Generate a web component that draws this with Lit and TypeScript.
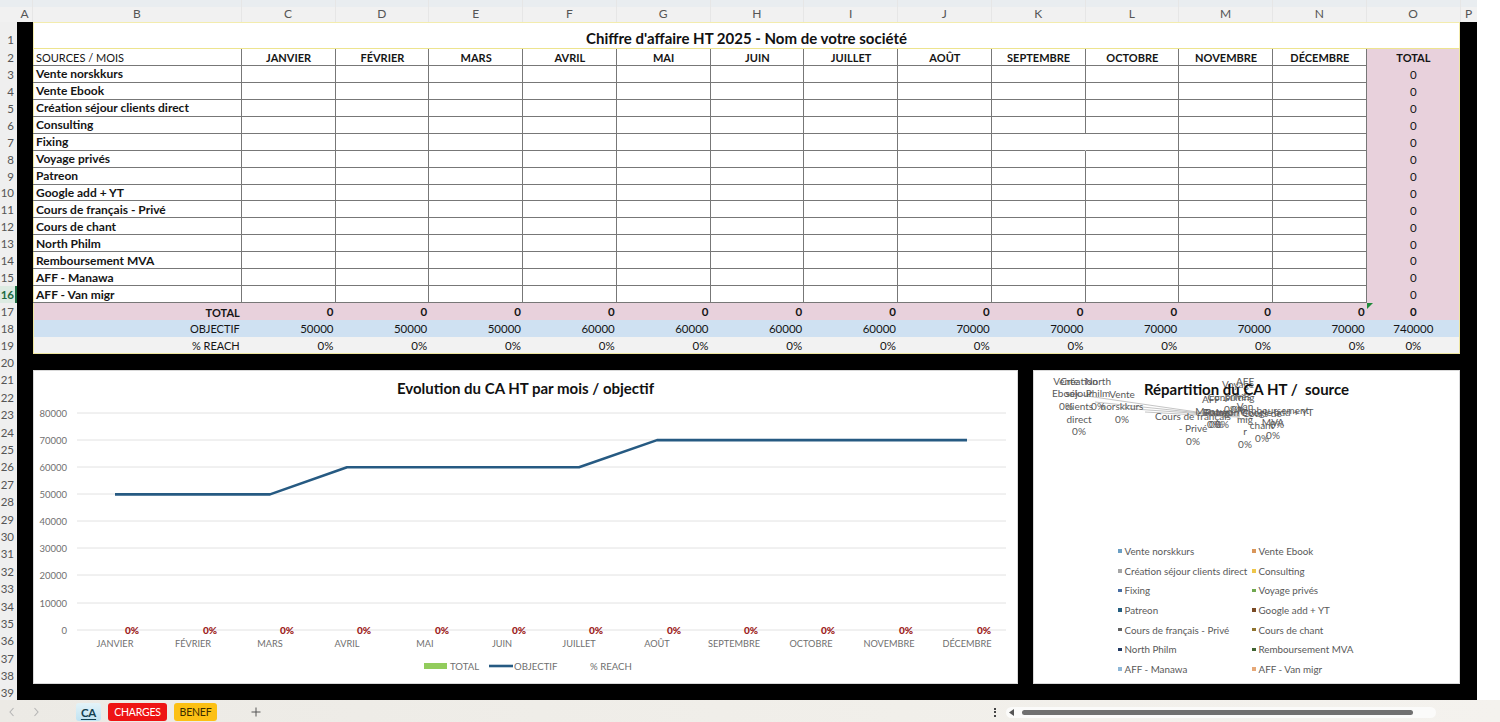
import { LitElement, html, css, svg } from "lit";
import { customElement } from "lit/decorators.js";

const COLS = ["A","B","C","D","E","F","G","H","I","J","K","L","M","N","O","P"];
const MONTHS = ["JANVIER","FÉVRIER","MARS","AVRIL","MAI","JUIN","JUILLET","AOÛT","SEPTEMBRE","OCTOBRE","NOVEMBRE","DÉCEMBRE"];
const SOURCES = ["Vente norskkurs","Vente Ebook","Création séjour clients direct","Consulting","Fixing","Voyage privés","Patreon","Google add + YT","Cours de français - Privé","Cours de chant","North Philm","Remboursement MVA","AFF - Manawa","AFF - Van migr"];
const OBJ = [50000,50000,50000,60000,60000,60000,60000,70000,70000,70000,70000,70000];
const LEGEND: [string,string][] = [
  ["Vente norskkurs","#6b9fc4"],["Vente Ebook","#d9965a"],
  ["Création séjour clients direct","#a5a5a5"],["Consulting","#eec64a"],
  ["Fixing","#4a6fa5"],["Voyage privés","#70a850"],
  ["Patreon","#255e80"],["Google add + YT","#7a4a25"],
  ["Cours de français - Privé","#636363"],["Cours de chant","#8f7430"],
  ["North Philm","#223a64"],["Remboursement MVA","#3f6432"],
  ["AFF - Manawa","#8fb8d8"],["AFF - Van migr","#e6a878"],
];
const X = [115,193,270,347,425,502,579,657,734,811,889,967];
const Y_LABELS: [string,number][] = [["80000",413],["70000",440],["60000",467],["50000",494],["40000",521],["30000",548],["20000",575],["10000",603],["0",630]];
const yFor = (v:number)=> 630 - v/80000*217;

const PIE_LABELS: [number,number,string[]][] = [
  [1066,381,["Vente","Ebook","0%"]],
  [1079,381,["Création","séjour","clients","direct","0%"]],
  [1098,381,["North","Philm","0%"]],
  [1122,394,["Vente","norskkurs","0%"]],
  [1193,416,["Cours de français","- Privé","0%"]],
  [1238,384,["Voyage","privés","0%"]],
  [1245,381,["AFF","-","Van","mig","r","0%"]],
  [1214,399,["AFF -","Manawa","0%"]],
  [1231,397,["Consulting","0%"]],
  [1222,412,["Patreon","0%"]],
  [1216,412,["Fixing","0%"]],
  [1273,410,["Remboursement","MVA","0%"]],
  [1277,412,["Google add + YT","0%"]],
  [1262,413,["Cours de","chant","0%"]],
];
const PIE_LINES = [
  "M1080 395 L1197 412 L1240 414","M1095 402 L1200 413 L1240 415","M1120 408 L1205 414 L1240 416","M1145 412 L1215 416 L1240 417","M1238 411 H1250 V419 H1238 Z",
];

@customElement("app-root")
export class AppRoot extends LitElement {
  static styles = css`
    :host { display:block; width:1500px; height:722px; overflow:hidden; background:#fff;
      font-family:"Lato","Liberation Sans",sans-serif; color:#111; }
    .head { display:flex; height:22px; background:linear-gradient(#e9edf0 0 7px,#f1f1f1 7px); color:#555; font-size:12px; }
    .corner { width:17px; flex:none; }
    .ch { display:flex; align-items:flex-end; justify-content:center; padding-bottom:1px; box-sizing:border-box; flex:none; border-right:1px solid #e6e6e6; }
    .ch.a { width:16px; } .ch.b { width:208.75px; } .ch.m { width:93.75px; } .ch.p { width:16.25px; border:0; }
    .head .rest { flex:1; background:#fff; }
    .mid { display:flex; height:678px; }
    .rows { width:17px; flex:none; background:#efefef; color:#555; font-size:11.5px; display:flex; flex-direction:column; }
    .rh { display:flex; align-items:center; justify-content:flex-end; padding-right:3px; height:16.94px; flex:none; box-sizing:border-box; }
    .rh.first { height:27px; padding-top:7px; }
    .rh.low { height:17.4px; }
    .rh.act { background:#dcebe2; color:#1e6b42; font-weight:700; border-right:2px solid #1e6b42; padding-right:1px; }
    .sheet { width:1460px; flex:none; background:#000; padding:0 17px 0 16px; box-sizing:border-box; display:flex; flex-direction:column; }
    .table { display:grid; grid-template-columns:208.75px repeat(12,93.75px) 93.25px; grid-template-rows:27px repeat(18,16.94px); background:#fff; font-size:12px; position:relative; }
    .title { grid-column:1 / -1; display:flex; align-items:center; justify-content:center; font-weight:700; font-size:15px; padding-top:4px; border:1px solid #f3ecae; border-bottom-color:#ede48f; box-sizing:border-box; }
    .c { display:flex; align-items:center; box-sizing:border-box; padding:1px 2px 0 3px; white-space:nowrap; overflow:hidden; color:#151515; line-height:1; }
    .caps { font-size:11px; }
    .num { font-size:11.5px; }
    .grid { border-right:1px solid #777; border-bottom:1px solid #777; }
    .gap { border-right-color:transparent; }
    .ctr { justify-content:center; }
    .r { justify-content:flex-end; }
    .bold { font-weight:700; }
    .pink { background:#e8d1dc; }
    .blue { background:#cfe1f2; }
    .grey { background:#f2f2f2; }
    .tri { position:absolute; left:1333.5px; top:280.5px; width:0; height:0; border-top:6px solid #1f8a3a; border-right:6px solid transparent; }
    .last { border-bottom:1px solid #eee6a0; }
    .edge { box-shadow:inset -1px 0 #eee6a0; padding-right:3px; }
    .edgel { box-shadow:inset 1px 0 #eee6a0; }
    .charts { display:flex; gap:15px; margin-top:16.5px; height:314px; }
    .chart { background:#fff; box-shadow:inset 0 0 0 1px #d9d9d9; flex:none; box-sizing:border-box; }
    .chart.line { width:985px; }
    .chart.pie { width:427px; display:flex; flex-direction:column; }
    svg { display:block; }
    .t { font-family:"Lato","Liberation Sans",sans-serif; }
    .legend { display:grid; grid-template-columns:134px 134px; grid-auto-rows:19.63px; padding-left:85px; font-size:9.8px; color:#595959; white-space:nowrap; }
    .li { display:flex; align-items:center; gap:3px; }
    .mk { width:3.5px; height:3.5px; flex:none; }
    .right { flex:1; background:#fff; }
    .tabs { height:22px; display:flex; align-items:center; padding-top:2px; box-sizing:border-box; background:linear-gradient(90deg,#eceae5,#f1efea 60%,#f4f2ee); font-size:10.5px; letter-spacing:-0.2px; }
    .nav { display:flex; gap:16px; margin-left:8px; width:68px; flex:none; }
    .tab { height:18px; display:flex; align-items:center; justify-content:center; border-radius:3px; box-sizing:border-box; flex:none; }
    .tab.ca { width:25px; background:linear-gradient(#e4f3f8,#bfe3f3); color:#12404f; font-weight:700; font-size:11.5px; text-decoration:underline; text-underline-offset:2px; margin-right:7px; }
    .tab.ch1 { width:59px; background:#ee1414; color:#fff; margin-right:7px; }
    .tab.be { width:43px; background:#fcc014; color:#3a2c00; }
    .plus { margin-left:34px; width:10px; flex:none; }
    .dots { margin-left:733px; width:3px; flex:none; display:flex; flex-direction:column; gap:1.5px; }
    .dots i { width:2px; height:2px; background:#444; display:block; }
    .track { margin-left:9px; width:430px; height:11px; background:#fbfbfa; border-radius:6px; display:flex; align-items:center; gap:4px; padding-left:3px; box-sizing:border-box; flex:none; }
    .thumb { width:391px; height:5px; border-radius:3px; background:#707070; margin-left:4px; }
  `;

  private cols(){ return COLS.map(c => html`<div class="ch ${c==="A"?"a":c==="B"?"b":c==="P"?"p":"m"}">${c}</div>`); }

  private rowHeads(){
    const out=[];
    for(let n=1;n<=39;n++){
      const k = n===1?"first":n>=20?"low":"";
      out.push(html`<div class="rh ${k} ${n===16?"act":""}">${n}</div>`);
    }
    return out;
  }

  private table(){
    return html`<div class="table">
      <div class="title">Chiffre d'affaire HT 2025 - Nom de votre société</div>
      <div class="c caps grid edgel">SOURCES / MOIS</div>
      ${MONTHS.map(m=>html`<div class="c caps grid ctr bold">${m}</div>`)}
      <div class="c caps ctr bold pink edge">TOTAL</div>
      ${SOURCES.map((s,row)=>html`
        <div class="c grid bold edgel">${s}</div>
        ${MONTHS.map((_,col)=>html`<div class="c grid ${row===4&&col===8?"gap":""}"></div>`)}
        <div class="c num ctr pink edge">0</div>`)}
      <div class="c caps r bold pink edgel">TOTAL</div>
      ${MONTHS.map(()=>html`<div class="c num r bold pink">0</div>`)}
      <div class="c num ctr bold pink edge">0</div>
      <div class="c caps r blue edgel">OBJECTIF</div>
      ${OBJ.map(v=>html`<div class="c num r blue">${v}</div>`)}
      <div class="c num ctr blue edge">740000</div>
      <div class="c caps r grey last edgel">% REACH</div>
      ${OBJ.map(()=>html`<div class="c num r grey last">0%</div>`)}
      <div class="c num ctr grey last edge">0%</div>
      <div class="tri"></div>
    </div>`;
  }

  private lineChart(){
    const pts = X.map((x,i)=>`${x},${yFor(OBJ[i])}`).join(" ");
    return html`<svg width="985" height="314" viewBox="33 370 985 314" class="t">
      <text x="525.5" y="394" text-anchor="middle" font-size="15" font-weight="700" fill="#111">Evolution du CA HT par mois / objectif</text>
      ${Y_LABELS.map(([l,y])=>svg`
        <line x1="77" x2="1006" y1=${y} y2=${y} stroke="#e2e2e2" stroke-width="1"/>
        <text x="67" y=${y+3.5} text-anchor="end" font-size="9.5" fill="#6f6f6f">${l}</text>`)}
      <polyline points=${pts} fill="none" stroke="#265a82" stroke-width="2.6" stroke-linejoin="round"/>
      ${X.map((x,i)=>svg`
        <text x=${x+17} y="634" text-anchor="middle" font-size="10" font-weight="900" fill="#9c2020">0%</text>
        <text x=${x} y="647" text-anchor="middle" font-size="9.2" fill="#6f6f6f">${MONTHS[i]}</text>`)}
      <rect x="424" y="663" width="23" height="6" fill="#92cc5c"/>
      <text x="450" y="670" font-size="9.6" fill="#6f6f6f">TOTAL</text>
      <line x1="489" x2="513" y1="666" y2="666" stroke="#265a82" stroke-width="2.6"/>
      <text x="514" y="670" font-size="9.6" fill="#6f6f6f">OBJECTIF</text>
      <text x="590" y="670" font-size="9.6" fill="#6f6f6f">% REACH</text>
    </svg>`;
  }

  private pieChart(){
    return html`<svg width="427" height="171" viewBox="1033 370 427 171" class="t">
      <g stroke="#b5b5b5" fill="none" stroke-width="0.8">${PIE_LINES.map(d=>svg`<path d=${d}/>`)}</g>
      ${PIE_LABELS.map(([x,y,ls])=>svg`<text text-anchor="middle" font-size="10" fill="#595959">${ls.map((l,i)=>svg`<tspan x=${x} y=${y+3.5+i*12.7}>${l}</tspan>`)}</text>`)}
      <text x="1246.5" y="394.5" text-anchor="middle" font-size="15" font-weight="700" fill="#111" xml:space="preserve">Répartition du CA HT /  source</text>
    </svg>
    <div class="legend">${LEGEND.map(([l,c])=>html`<div class="li"><span class="mk" style="background:${c}"></span>${l}</div>`)}</div>`;
  }

  render(){
    return html`
      <div class="head"><div class="corner"></div>${this.cols()}<div class="rest"></div></div>
      <div class="mid">
        <div class="rows">${this.rowHeads()}</div>
        <div class="sheet">
          ${this.table()}
          <div class="charts">
            <div class="chart line">${this.lineChart()}</div>
            <div class="chart pie">${this.pieChart()}</div>
          </div>
        </div>
        <div class="right"></div>
      </div>
      <div class="tabs">
        <div class="nav">
          <svg width="8" height="10" viewBox="0 0 8 10"><path d="M5.5 1 2 5l3.5 4" fill="none" stroke="#b5b5b5" stroke-width="1.1"/></svg>
          <svg width="8" height="10" viewBox="0 0 8 10"><path d="M2.5 1 6 5 2.5 9" fill="none" stroke="#b5b5b5" stroke-width="1.1"/></svg>
        </div>
        <div class="tab ca">CA</div>
        <div class="tab ch1">CHARGES</div>
        <div class="tab be">BENEF</div>
        <svg class="plus" width="10" height="10" viewBox="0 0 10 10"><path d="M5 0.5v9M0.5 5h9" stroke="#555" stroke-width="1"/></svg>
        <div class="dots"><i></i><i></i><i></i></div>
        <div class="track">
          <svg width="5" height="7" viewBox="0 0 5 7"><path d="M5 0v7L0 3.5z" fill="#555"/></svg>
          <div class="thumb"></div>
        </div>
      </div>`;
  }
}
